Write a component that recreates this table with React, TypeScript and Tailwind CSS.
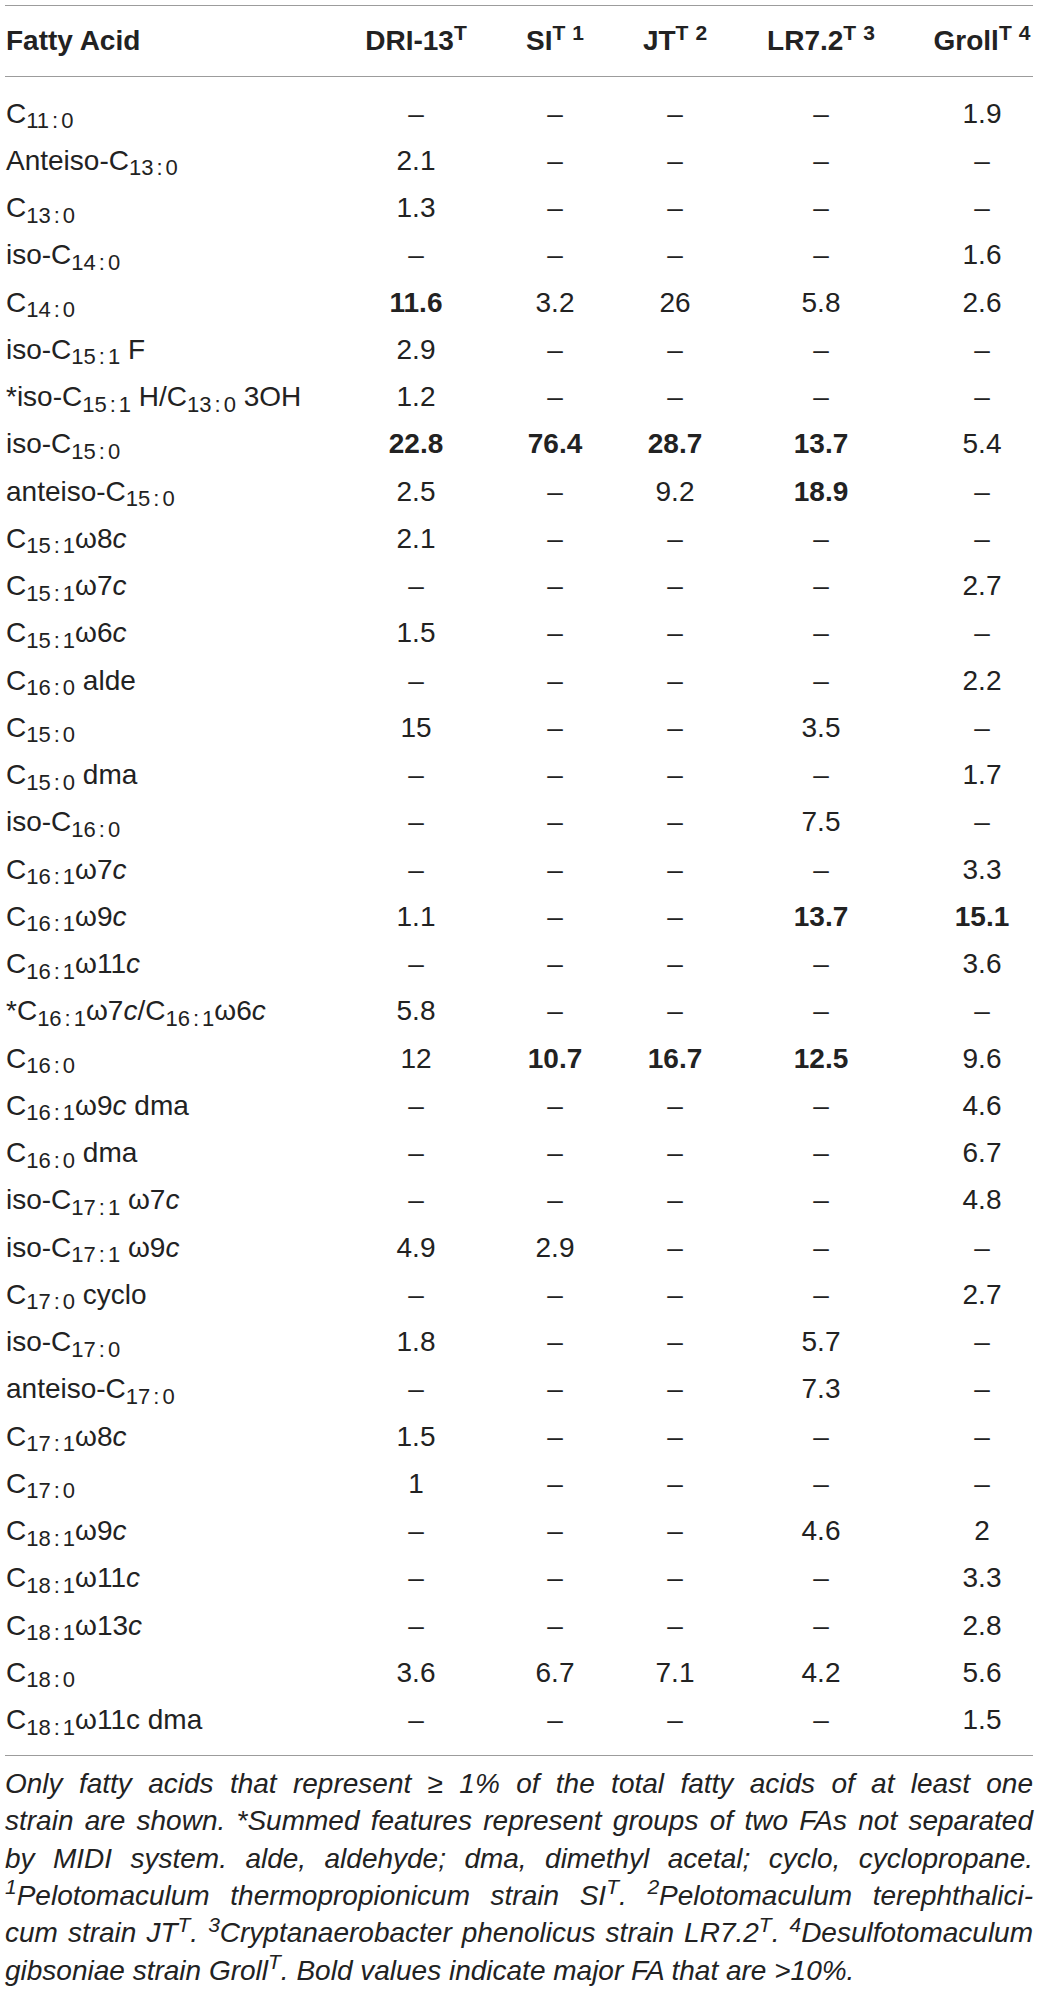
import React from 'react';

const cols = 'grid grid-cols-[341px_140px_138px_102px_205px_102px]';

// subscript like 15:1, with the colon spaced out as in the print layout
const Sb = ({ v }: { v: string }) => {
  const [a, b] = v.split(':');
  return (
    <sub className="text-[22px]">
      {a}
      <span className="mx-[3px]">:</span>
      {b}
    </sub>
  );
};

// header superscript: "T" plus an optional footnote number
const Hs = ({ n }: { n?: string }) => (
  <sup>
    T{n && <span className="ml-[7px]">{n}</span>}
  </sup>
);

type Row = { label: React.ReactNode; values: string[] };

const D = '–';

const rows: Row[] = [
  { label: <>C<Sb v="11:0" /></>, values: [D, D, D, D, '1.9'] },
  { label: <>Anteiso-C<Sb v="13:0" /></>, values: ['2.1', D, D, D, D] },
  { label: <>C<Sb v="13:0" /></>, values: ['1.3', D, D, D, D] },
  { label: <>iso-C<Sb v="14:0" /></>, values: [D, D, D, D, '1.6'] },
  { label: <>C<Sb v="14:0" /></>, values: ['!11.6', '3.2', '26', '5.8', '2.6'] },
  { label: <>iso-C<Sb v="15:1" /> F</>, values: ['2.9', D, D, D, D] },
  { label: <>*iso-C<Sb v="15:1" /> H/C<Sb v="13:0" /> 3OH</>, values: ['1.2', D, D, D, D] },
  { label: <>iso-C<Sb v="15:0" /></>, values: ['!22.8', '!76.4', '!28.7', '!13.7', '5.4'] },
  { label: <>anteiso-C<Sb v="15:0" /></>, values: ['2.5', D, '9.2', '!18.9', D] },
  { label: <>C<Sb v="15:1" />ω8<i>c</i></>, values: ['2.1', D, D, D, D] },
  { label: <>C<Sb v="15:1" />ω7<i>c</i></>, values: [D, D, D, D, '2.7'] },
  { label: <>C<Sb v="15:1" />ω6<i>c</i></>, values: ['1.5', D, D, D, D] },
  { label: <>C<Sb v="16:0" /> alde</>, values: [D, D, D, D, '2.2'] },
  { label: <>C<Sb v="15:0" /></>, values: ['15', D, D, '3.5', D] },
  { label: <>C<Sb v="15:0" /> dma</>, values: [D, D, D, D, '1.7'] },
  { label: <>iso-C<Sb v="16:0" /></>, values: [D, D, D, '7.5', D] },
  { label: <>C<Sb v="16:1" />ω7<i>c</i></>, values: [D, D, D, D, '3.3'] },
  { label: <>C<Sb v="16:1" />ω9<i>c</i></>, values: ['1.1', D, D, '!13.7', '!15.1'] },
  { label: <>C<Sb v="16:1" />ω11<i>c</i></>, values: [D, D, D, D, '3.6'] },
  { label: <>*C<Sb v="16:1" />ω7<i>c</i>/C<Sb v="16:1" />ω6<i>c</i></>, values: ['5.8', D, D, D, D] },
  { label: <>C<Sb v="16:0" /></>, values: ['12', '!10.7', '!16.7', '!12.5', '9.6'] },
  { label: <>C<Sb v="16:1" />ω9<i>c</i> dma</>, values: [D, D, D, D, '4.6'] },
  { label: <>C<Sb v="16:0" /> dma</>, values: [D, D, D, D, '6.7'] },
  { label: <>iso-C<Sb v="17:1" /> ω7<i>c</i></>, values: [D, D, D, D, '4.8'] },
  { label: <>iso-C<Sb v="17:1" /> ω9<i>c</i></>, values: ['4.9', '2.9', D, D, D] },
  { label: <>C<Sb v="17:0" /> cyclo</>, values: [D, D, D, D, '2.7'] },
  { label: <>iso-C<Sb v="17:0" /></>, values: ['1.8', D, D, '5.7', D] },
  { label: <>anteiso-C<Sb v="17:0" /></>, values: [D, D, D, '7.3', D] },
  { label: <>C<Sb v="17:1" />ω8<i>c</i></>, values: ['1.5', D, D, D, D] },
  { label: <>C<Sb v="17:0" /></>, values: ['1', D, D, D, D] },
  { label: <>C<Sb v="18:1" />ω9<i>c</i></>, values: [D, D, D, '4.6', '2'] },
  { label: <>C<Sb v="18:1" />ω11<i>c</i></>, values: [D, D, D, D, '3.3'] },
  { label: <>C<Sb v="18:1" />ω13<i>c</i></>, values: [D, D, D, D, '2.8'] },
  { label: <>C<Sb v="18:0" /></>, values: ['3.6', '6.7', '7.1', '4.2', '5.6'] },
  { label: <>C<Sb v="18:1" />ω11c dma</>, values: [D, D, D, D, '1.5'] },
];

const Cell = ({ v, i }: { v: string; i: number }) => {
  const bold = v.startsWith('!');
  return (
    <div className={`text-center ${i === 3 ? 'pr-[15px]' : ''} ${bold ? 'font-bold' : ''}`}>
      {bold ? v.slice(1) : v}
    </div>
  );
};

export default function App() {
  return (
    <div className="w-[1041px] bg-white pt-[5px] font-['Liberation_Sans',Arial,sans-serif] text-[#222]">
      <div className="ml-[5px] w-[1028px]">
        <div className={`${cols} h-[72px] items-center border-y border-[#9c9c9c] text-[28px] font-bold`}>
          <div className="pl-[1px]">Fatty Acid</div>
          <div className="text-center">DRI-13<Hs /></div>
          <div className="text-center">SI<Hs n="1" /></div>
          <div className="text-center">JT<Hs n="2" /></div>
          <div className="pr-[15px] text-center">LR7.2<Hs n="3" /></div>
          <div className="text-center">Groll<Hs n="4" /></div>
        </div>

        <div className="border-b border-[#9c9c9c] pt-[13px] pb-[11px]">
          {rows.map((r, idx) => (
            <div key={idx} className={`${cols} h-[47.26px] items-center text-[28px] leading-none`}>
              <div className="pl-[1px] whitespace-nowrap">{r.label}</div>
              {r.values.map((v, i) => (
                <Cell key={i} v={v} i={i} />
              ))}
            </div>
          ))}
        </div>

        <div className="pt-[9px] text-[28px] italic leading-[37.4px]">
          <div className="text-justify [text-align-last:justify]">
            Only fatty acids that represent ≥ 1% of the total fatty acids of at least one
          </div>
          <div className="text-justify [text-align-last:justify]">
            strain are shown. *Summed features represent groups of two FAs not separated
          </div>
          <div className="text-justify [text-align-last:justify]">
            by MIDI system. alde, aldehyde; dma, dimethyl acetal; cyclo, cyclopropane.
          </div>
          <div className="text-justify [text-align-last:justify]">
            <sup>1</sup>Pelotomaculum thermopropionicum strain SI<sup>T</sup>. <sup>2</sup>Pelotomaculum terephthalici-
          </div>
          <div className="text-justify [text-align-last:justify]">
            cum strain JT<sup>T</sup>. <sup>3</sup>Cryptanaerobacter phenolicus strain LR7.2<sup>T</sup>. <sup>4</sup>Desulfotomaculum
          </div>
          <div>
            gibsoniae strain Groll<sup>T</sup>. Bold values indicate major FA that are &gt;10%.
          </div>
        </div>
      </div>
    </div>
  );
}
